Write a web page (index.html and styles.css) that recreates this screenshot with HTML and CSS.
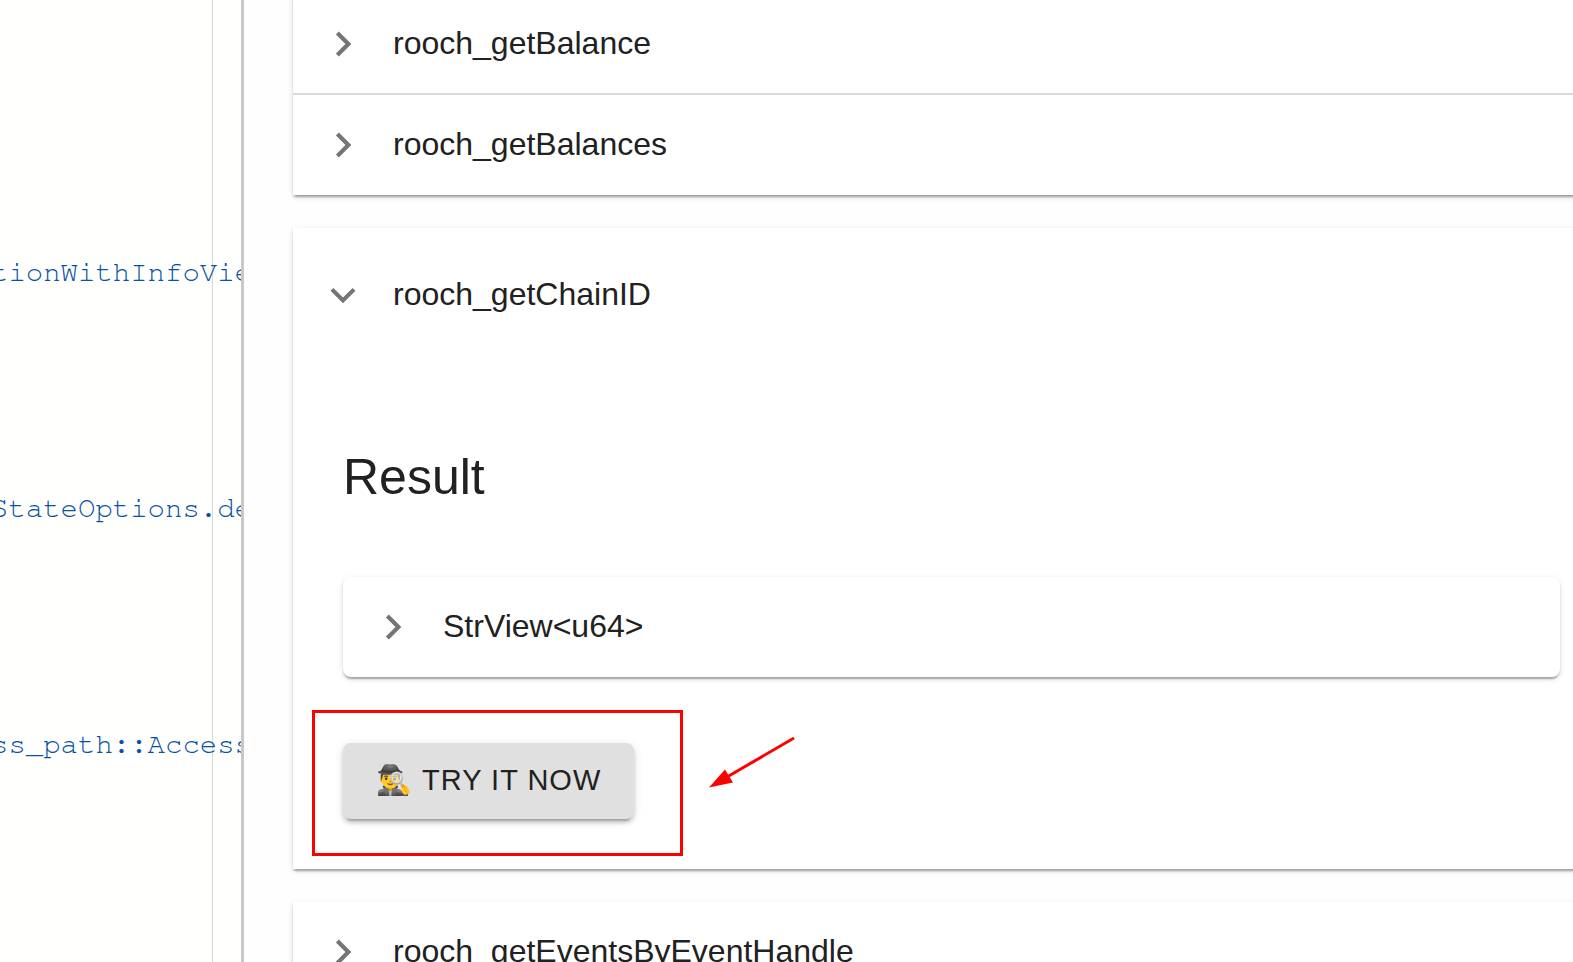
FILE: index.html
```
<!DOCTYPE html>
<html lang="en">
<head>
<meta charset="utf-8">
<title>API playground</title>
<link rel="stylesheet" href="styles.css">
</head>
<body>
<div class="layout">
  <aside class="editor">
    <div class="code-lines">
      <code class="code-line">tionWithInfoVie</code>
      <code class="code-line">StateOptions.de</code>
      <code class="code-line">ss_path::Access</code>
    </div>
  </aside>
  <main class="docs">
    <section class="card">
      <button class="row row-divided" type="button">
        <svg class="chevron" viewBox="0 0 24 24" aria-hidden="true"><path d="M10 6L8.59 7.41 13.17 12l-4.58 4.59L10 18l6-6z"/></svg>
        <span class="row-title">rooch_getBalance</span>
      </button>
      <button class="row" type="button">
        <svg class="chevron" viewBox="0 0 24 24" aria-hidden="true"><path d="M10 6L8.59 7.41 13.17 12l-4.58 4.59L10 18l6-6z"/></svg>
        <span class="row-title">rooch_getBalances</span>
      </button>
    </section>
    <section class="card">
      <button class="row row-open" type="button" aria-expanded="true">
        <svg class="chevron chevron-open" viewBox="0 0 24 24" aria-hidden="true"><path d="M10 6L8.59 7.41 13.17 12l-4.58 4.59L10 18l6-6z"/></svg>
        <span class="row-title">rooch_getChainID</span>
      </button>
      <div class="details">
        <h2 class="heading">Result</h2>
        <div class="card card-nested">
          <button class="row" type="button">
            <svg class="chevron" viewBox="0 0 24 24" aria-hidden="true"><path d="M10 6L8.59 7.41 13.17 12l-4.58 4.59L10 18l6-6z"/></svg>
            <span class="row-title">StrView&lt;u64&gt;</span>
          </button>
        </div>
        <div class="action">
          <button class="try-button" type="button"><span class="emoji">🕵️‍♂️</span><span>TRY IT NOW</span></button>
          <div class="highlight"></div>
          <svg class="arrow" viewBox="0 0 90 56" aria-hidden="true">
            <path d="M86 4L19 43" fill="none" stroke="#f00" stroke-width="3"/>
            <path d="M1 53.500L17 35.500 25 48.500z" fill="#f00"/>
          </svg>
        </div>
      </div>
    </section>
    <section class="card">
      <button class="row" type="button">
        <svg class="chevron" viewBox="0 0 24 24" aria-hidden="true"><path d="M10 6L8.59 7.41 13.17 12l-4.58 4.59L10 18l6-6z"/></svg>
        <span class="row-title">rooch_getEventsByEventHandle</span>
      </button>
    </section>
  </main>
</div>
</body>
</html>
```
FILE: styles.css
```
* {
  box-sizing: border-box;
}

body {
  margin: 0;
  background: #fefefe;
  color: #212121;
  font-family: "Liberation Sans", Arial, sans-serif;
}

.layout {
  display: flex;
  height: 100vh;
  overflow: hidden;
}

.editor {
  flex: none;
  width: 244px;
  overflow: hidden;
  border-right: 3px solid #c8c8c8;
  background: linear-gradient(#d8d8d8, #d8d8d8) 212px 0 / 1px 100% no-repeat #fffffd;
}

.code-lines {
  display: flex;
  flex-direction: column;
  gap: 196px;
  margin-left: -9px;
  padding-top: 253px;
}

.code-line {
  color: #0451a5;
  font-family: "FreeMono", "Nimbus Mono PS", "Courier Prime", "Courier New", "Liberation Mono", monospace;
  font-size: 29px;
  line-height: 40px;
  white-space: nowrap;
}

.docs {
  flex: 1;
  display: flex;
  flex-direction: column;
  gap: 33px;
  margin: -5px -37px 0 0;
  padding-left: 49px;
}

.card {
  flex: none;
  background: #fff;
  box-shadow: 0 4px 2px -2px rgba(0, 0, 0, .2), 0 2px 2px rgba(0, 0, 0, .14), 0 2px 6px rgba(0, 0, 0, .12);
}

.card-nested {
  border-radius: 8px;
}

.row {
  display: flex;
  align-items: center;
  gap: 25px;
  width: 100%;
  height: 100px;
  padding: 0 25px;
  border: 0;
  background: none;
  color: inherit;
  font-family: inherit;
  font-size: 32px;
  line-height: 48px;
  text-align: left;
}

.row-title {
  padding-bottom: 2px;
}

.row-divided {
  border-bottom: 2px solid #dadada;
}

.row-open {
  height: 133px;
}

.chevron {
  flex: none;
  width: 50px;
  height: 50px;
  fill: #757575;
}

.chevron-open {
  transform: rotate(90deg);
}

.details {
  padding: 83px 50px 50px;
}

.heading {
  margin: 0 0 67px;
  font-size: 50px;
  font-weight: 400;
  line-height: 66px;
}

.action {
  position: relative;
  margin-top: 66px;
}

.try-button {
  display: flex;
  align-items: center;
  gap: 9px;
  height: 76px;
  padding: 0 33px 2px;
  border: 0;
  border-radius: 8px;
  background: #e0e0e0;
  box-shadow: 0 6px 2px -4px rgba(0, 0, 0, .2), 0 4px 4px rgba(0, 0, 0, .14), 0 2px 10px rgba(0, 0, 0, .12);
  color: #212121;
  font-family: inherit;
  font-size: 29px;
  letter-spacing: 1px;
}

.emoji {
  font-family: "Noto Color Emoji", sans-serif;
}

.highlight {
  position: absolute;
  top: -33px;
  left: -31px;
  width: 371px;
  height: 146px;
  border: 3px solid #f00;
}

.arrow {
  position: absolute;
  top: -9px;
  left: 365px;
  width: 90px;
  height: 56px;
}
```
